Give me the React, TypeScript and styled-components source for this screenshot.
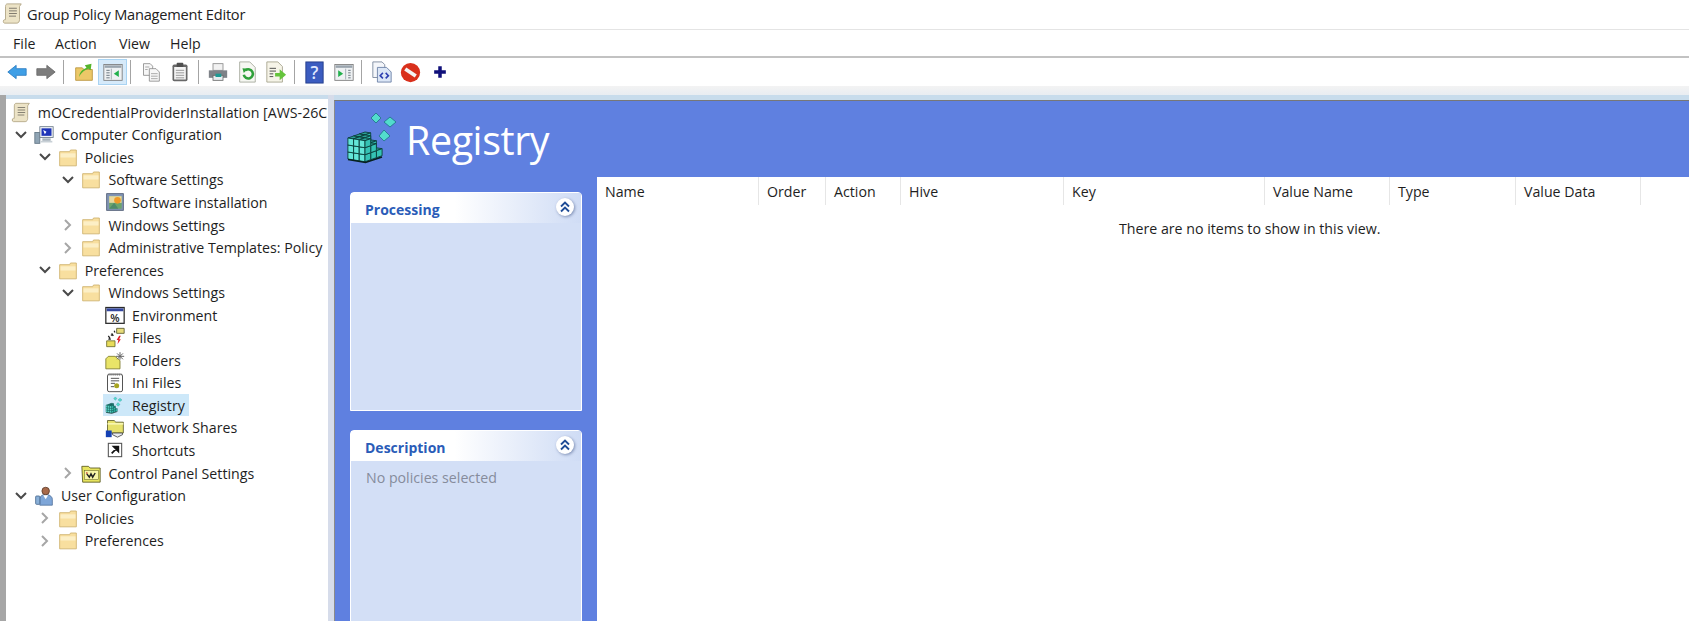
import { ReactNode } from "react";
import styled, { createGlobalStyle } from "styled-components";

const FONT = `"Open Sans", "Noto Sans", "Liberation Sans", sans-serif`;

const GlobalStyle = createGlobalStyle`
  html, body {
    margin: 0;
    background: #ffffff;
    overflow: hidden;
  }
  * {
    box-sizing: border-box;
  }
`;

const Page = styled.div`
  display: flex;
  flex-direction: column;
  width: 1689px;
  height: 621px;
  overflow: hidden;
  font-family: ${FONT};
  color: #1e1e1e;
`;

const TitleBar = styled.div`
  display: flex;
  align-items: center;
  gap: 4px;
  height: 30px;
  padding: 0 0 2px 2px;
  border-bottom: 1px solid #e4e4e4;
  font-size: 14.6px;
  letter-spacing: -0.22px;
  color: #222222;
`;

const MenuBar = styled.div`
  display: flex;
  height: 28px;
  padding-left: 13px;
  align-items: center;
  border-bottom: 2px solid #c2c2c2;
  font-size: 14.2px;
`;

const MenuItem = styled.span<{ $width: number }>`
  width: ${(p) => p.$width}px;
`;

const Toolbar = styled.div`
  display: flex;
  align-items: center;
  height: 28px;
  padding-left: 2px;
  background: #ffffff;
`;

const ToolButton = styled.div<{ $active?: boolean }>`
  display: flex;
  align-items: center;
  justify-content: center;
  width: 29px;
  height: 26px;
  border: 1px solid ${(p) => (p.$active ? "#a9d3f2" : "transparent")};
  background: ${(p) => (p.$active ? "#d6eafa" : "transparent")};
`;

const ToolSeparator = styled.div`
  width: 1px;
  height: 24px;
  margin: 0 5.3px 0 3px;
  background: #a4a4a4;
`;

const Strip = styled.div`
  height: 9px;
  background: linear-gradient(#f3f3f3, #e9edf2);
`;

const Workspace = styled.div`
  display: flex;
  flex: 1;
  min-height: 0;
  background: #c8dcec;
`;

const LeftEdge = styled.div`
  width: 6px;
  background: #a6a6a6;
`;

const TreePane = styled.div`
  width: 322px;
  margin-top: 4px;
  padding-top: 2px;
  background: #ffffff;
  font-size: 14.2px;
  overflow: hidden;
`;

const TreeRow = styled.div<{ $level: number }>`
  display: flex;
  align-items: center;
  height: 22.56px;
  padding-left: ${(p) => 6 + p.$level * 23.7}px;
  white-space: nowrap;
`;

const Chevron = styled.div<{ $open?: boolean }>`
  display: flex;
  align-items: center;
  justify-content: center;
  flex: none;
  width: 18px;
  margin-right: 4px;
  color: ${(p) => (p.$open ? "#4a4a4a" : "#a6a6a6")};
`;

const TreeEntry = styled.div<{ $selected?: boolean }>`
  display: flex;
  align-items: center;
  gap: 7px;
  height: 22px;
  margin-left: -2px;
  padding: 0 4px 0 2px;
  background: ${(p) => (p.$selected ? "#cde8f9" : "transparent")};
`;

const IconSlot = styled.div`
  display: flex;
  align-items: center;
  justify-content: center;
  flex: none;
  width: 20px;
`;

const Splitter = styled.div`
  width: 6px;
  background: #d6dcea;
`;

const Details = styled.div`
  display: flex;
  flex: 1;
  flex-direction: column;
  min-width: 0;
  margin-top: 5px;
  border-top: 1px solid #777777;
  border-left: 1px solid #8a8a8a;
  background: #5f80e0;
`;

const Banner = styled.div`
  display: flex;
  align-items: center;
  flex: none;
  height: 76px;
  padding: 0 0 0 10px;
  gap: 1px;
`;

const BannerTitle = styled.h1`
  margin: 0;
  padding-top: 2px;
  font-size: 39.4px;
  font-weight: 400;
  color: #ffffff;
  letter-spacing: -0.4px;
`;

const Body = styled.div`
  display: flex;
  flex: 1;
  min-height: 0;
`;

const Sidebar = styled.div`
  display: flex;
  flex: none;
  flex-direction: column;
  gap: 19px;
  width: 262px;
  padding: 15px 15px 0 15px;
  overflow: hidden;
`;

const Panel = styled.section<{ $height: number }>`
  flex: none;
  height: ${(p) => p.$height}px;
  border: 1px solid #ffffff;
  border-radius: 4px 4px 0 0;
  background: #d3dff6;
`;

const PanelHeader = styled.div`
  display: flex;
  align-items: center;
  justify-content: space-between;
  height: 30px;
  padding: 3px 7px 0 14px;
  background: linear-gradient(90deg, #ffffff 0%, #ffffff 45%, #cfdcf5 100%);
  font-size: 14px;
  font-weight: 700;
  color: #2a5cb8;
`;

const CollapseButton = styled.div`
  display: flex;
  align-items: center;
  justify-content: center;
  width: 18px;
  height: 18px;
  margin-top: -5px;
  border-radius: 50%;
  background: #ffffff;
  box-shadow: 1px 1px 3px rgba(60, 80, 130, 0.55);
`;

const PanelText = styled.div`
  padding: 7px 15px;
  font-size: 14.2px;
  color: #868c9c;
`;

const ListPane = styled.div`
  flex: 1;
  min-width: 0;
  background: #ffffff;
`;

const ListHeader = styled.div`
  display: grid;
  grid-template-columns: 162px 67px 75px 163px 201px 125px 126px 125px;
  height: 28px;
`;

const ColumnHead = styled.div`
  display: flex;
  align-items: center;
  padding: 0 0 0 8px;
  border-right: 1px solid #e6e6e6;
  font-size: 14.2px;
  white-space: nowrap;
`;

const EmptyMessage = styled.div`
  margin-top: 14px;
  padding-left: 522px;
  font-size: 14.2px;
`;

const Svg = ({ size = 20, children }: { size?: number; children: ReactNode }) => (
  <svg width={size} height={size} viewBox="0 0 24 24">
    {children}
  </svg>
);

const ChevronDown = () => (
  <svg width="14" height="10" viewBox="0 0 14 10">
    <path d="M2 2l5 5 5-5" fill="none" stroke="currentColor" strokeWidth="2" />
  </svg>
);

const ChevronRight = () => (
  <svg width="10" height="14" viewBox="0 0 10 14">
    <path d="M2 2l5 5-5 5" fill="none" stroke="currentColor" strokeWidth="2" />
  </svg>
);

const DoubleUp = () => (
  <svg width="12" height="12" viewBox="0 0 12 12">
    <path d="M2 5.5l4-4 4 4M2 10.5l4-4 4 4" fill="none" stroke="#1f4c96" strokeWidth="1.9" />
  </svg>
);

const ScrollIcon = ({ size = 21 }: { size?: number }) => (
  <Svg size={size}>
    <path d="M6 1h16l-2 3v15c0 2-1 4-3 4H3c-2 0-2-4 0-4h1V4c0-2 1-3 2-3z" fill="#ece3c6" stroke="#b0a383" />
    <path d="M8 6h9M8 9h9M8 12h9M8 15h8" stroke="#7d786c" strokeWidth="1.1" />
  </Svg>
);

const FolderIcon = () => (
  <Svg size={21}>
    <path d="M2 5h12l1-2h7v19H2z" fill="#f8df9f" stroke="#cdb06a" />
    <path d="M3 7h18v5H3z" fill="#fcefc6" />
  </Svg>
);

const ComputerIcon = () => (
  <Svg size={22}>
    <rect x="1" y="9" width="6" height="13" fill="#8fa4b4" stroke="#5f7382" />
    <rect x="7" y="2" width="16" height="13" fill="#f0f3f6" stroke="#6a7a88" />
    <rect x="9" y="4" width="12" height="9" fill="#1f35b8" />
    <path d="M11 6l4 2-2 3z" fill="#ffffff" />
    <path d="M10 16h10v3H10z" fill="#a9b4bd" />
    <path d="M8 19h14v2H8z" fill="#c8d0d6" />
  </Svg>
);

const SoftwareIcon = () => (
  <Svg size={20}>
    <rect x="2" y="2" width="20" height="20" fill="#8094b4" stroke="#4c5a72" />
    <rect x="5" y="5" width="15" height="15" fill="#6ca56c" />
    <rect x="5" y="5" width="15" height="8" fill="#e8d8a0" />
    <circle cx="15" cy="10" r="4" fill="#f09a28" />
    <path d="M5 20l6-7 5 7z" fill="#4f8a6a" />
  </Svg>
);

const EnvironmentIcon = () => (
  <Svg size={22}>
    <rect x="1" y="3" width="22" height="19" fill="#ffffff" stroke="#2a2a2a" strokeWidth="1.5" />
    <rect x="2" y="4" width="20" height="3.5" fill="#34479e" />
    <text x="12" y="20" fontSize="13" fontWeight="600" textAnchor="middle" fontFamily={FONT} fill="#222222">
      %
    </text>
  </Svg>
);

const FilesIcon = () => (
  <Svg size={21}>
    <path d="M14 1h9v6h-9z" fill="#e8dc7a" stroke="#55552a" />
    <path d="M2 16h10v7H2z" fill="#e8dc5a" stroke="#6a6a2a" />
    <path d="M8 7l2 3M4 10l2 3M11 4l1 2M4 14h3M7 9h2" stroke="#222222" strokeWidth="1.5" />
    <path d="M17 10l-3 5h2l-1 5 4-6h-2l2-4z" fill="#e0202c" />
  </Svg>
);

const FoldersIcon = () => (
  <Svg size={21}>
    <path d="M1 10l3-3h8l6 5v10H1z" fill="#e9e468" stroke="#7c7a2a" />
    <path d="M18 2v9M13 7h10M14.5 3.5l7 7M21.5 3.5l-7 7" stroke="#666666" strokeWidth="1.2" />
  </Svg>
);

const IniIcon = () => (
  <Svg size={21}>
    <rect x="3" y="2" width="18" height="21" rx="2" fill="#ffffff" stroke="#333333" />
    <path d="M4 2.5h16" stroke="#777777" strokeWidth="2" strokeDasharray="1.5 1" />
    <path d="M7 7h10M7 10h10M7 13h5M7 17h4" stroke="#333333" />
    <circle cx="14" cy="16" r="3" fill="#a8a520" />
  </Svg>
);

const NetworkIcon = () => (
  <Svg size={22}>
    <path d="M3 3h8l2 2h9v13H3z" fill="#e6e16c" stroke="#5b5b2a" />
    <path d="M3 7h19" stroke="#f8f6b0" strokeWidth="2" />
    <rect x="1" y="15" width="7" height="8" fill="#1440b4" />
    <path d="M9 18h12v2l-6 3-6-3z" fill="#e8ebf0" stroke="#444444" />
  </Svg>
);

const ShortcutIcon = () => (
  <Svg size={16}>
    <rect x="2" y="2" width="20" height="20" fill="#ffffff" stroke="#555555" strokeWidth="1.6" />
    <path d="M7 17l6-6M10 7h7v7z" stroke="#111111" strokeWidth="2.6" fill="#111111" />
  </Svg>
);

const ControlPanelIcon = () => (
  <Svg size={22}>
    <path d="M1 4h8l2 2h12v17H2z" fill="#e7e45e" stroke="#55551f" />
    <rect x="4" y="9" width="17" height="11" fill="#f8f6a8" stroke="#55551f" strokeWidth="0.6" />
    <path d="M7 13l3 4 2-4 2 4 3-5" fill="none" stroke="#222222" strokeWidth="1.7" />
    <circle cx="7" cy="12" r="1" fill="#c02020" />
  </Svg>
);

const UserIcon = () => (
  <Svg size={22}>
    <path d="M7 23V15c0-3 4-5 7-5s8 2 8 6v7z" fill="#7ea6d8" stroke="#55759e" />
    <circle cx="14" cy="6" r="4.5" fill="#a86a4a" stroke="#5e3c2a" />
    <rect x="2" y="12" width="5" height="10" rx="1" fill="#8ab0d8" stroke="#46678e" />
    <path d="M11 11l3 5 3-5z" fill="#ffffff" />
  </Svg>
);

// small cubes on a skewed projection, painted from the back corner to the front
const RegistryIcon = ({ size }: { size: number }) => {
  const missing = new Set(["2-0-2", "2-1-2", "1-0-2", "2-0-1"]);
  const cubes: ReactNode[] = [];
  const pt = (a: number, b: number, c: number) =>
    `${20 + (a - b) * 5.7},${43 + a * 0.9 + b * 2 - c * 7}`;
  for (let c = 0; c < 3; c++) {
    for (let a = 0; a < 3; a++) {
      for (let b = 0; b < 3; b++) {
        if (missing.has(`${a}-${b}-${c}`)) continue;
        cubes.push(
          <g key={`${a}-${b}-${c}`} stroke="#0a3f3c" strokeWidth="0.9">
            <polygon
              fill="#2a9f94"
              points={`${pt(a, b, c + 1)} ${pt(a + 1, b, c + 1)} ${pt(a + 1, b + 1, c + 1)} ${pt(a, b + 1, c + 1)}`}
            />
            <polygon
              fill="#63e6d8"
              points={`${pt(a, b + 1, c + 1)} ${pt(a + 1, b + 1, c + 1)} ${pt(a + 1, b + 1, c)} ${pt(a, b + 1, c)}`}
            />
            <polygon
              fill="#35c2b4"
              points={`${pt(a + 1, b, c + 1)} ${pt(a + 1, b + 1, c + 1)} ${pt(a + 1, b + 1, c)} ${pt(a + 1, b, c)}`}
            />
          </g>
        );
      }
    }
  }
  return (
    <svg width={size} height={(size * 58) / 60} viewBox="0 0 60 58">
      {cubes}
      <path d="M3 49.5L20.5 52.5 37 47" fill="none" stroke="#06211f" strokeWidth="1.6" />
      <g stroke="#1f6f88" strokeWidth="0.8" fill="#52dccd">
        <polygon points="31,3 36,8 31,13 26,8" />
        <polygon points="45,7 51,12 45,17 39,12" />
        <polygon points="39,20 45,26 39,31 34,26" />
      </g>
    </svg>
  );
};

const BackIcon = () => (
  <Svg>
    <path d="M1 12l10-8v4h12v8H11v4z" fill="#3f9fe6" stroke="#2b7cc2" />
  </Svg>
);

const ForwardIcon = () => (
  <Svg>
    <path d="M23 12L13 4v4H1v8h12v4z" fill="#7d7d7d" stroke="#6a6a6a" />
  </Svg>
);

const UpFolderIcon = () => (
  <Svg>
    <path d="M2 7h8l2 2h10v13H2z" fill="#ecc868" stroke="#b8923a" />
    <path d="M6 18c1-6 4-9 9-11l-2-3 8-2-1 8-3-2c-3 1-8 4-11 10z" fill="#55b52c" />
  </Svg>
);

const WindowIcon = ({ arrow }: { arrow: "left" | "right" }) => (
  <Svg>
    <rect x="1" y="3" width="22" height="19" fill="#eef1f3" stroke="#777777" />
    <rect x="2" y="4" width="20" height="3" fill="#9aa4ae" />
    {arrow === "left" ? (
      <>
        <path d="M4 10h4M4 13h4M4 16h4M4 19h4" stroke="#6f7a84" strokeWidth="1.2" />
        <path d="M10 8v13" stroke="#9aa4ae" />
        <path d="M13 14l6-4v8z" fill="#22b04c" />
      </>
    ) : (
      <>
        <path d="M17 10h3M17 13h3M17 16h3M17 19h3" stroke="#6f7a84" strokeWidth="1.2" />
        <path d="M14 8v13" stroke="#9aa4ae" />
        <path d="M11 14l-6-4v8z" fill="#22b04c" />
      </>
    )}
  </Svg>
);

const CopyIcon = () => (
  <Svg>
    <path d="M3 2h8l3 3v11H3z" fill="#f7f7f7" stroke="#8a8a8a" />
    <path d="M10 8h8l4 4v11H10z" fill="#f7f7f7" stroke="#8a8a8a" />
    <path d="M5 6h5M5 9h3M12 14h8M12 17h8M12 20h8" stroke="#9a9a9a" />
  </Svg>
);

const PasteIcon = () => (
  <Svg>
    <rect x="3" y="3" width="18" height="20" rx="2" fill="#686868" />
    <rect x="5" y="6" width="14" height="15" fill="#f4f4f4" />
    <rect x="8" y="1" width="8" height="5" rx="1" fill="#4f4f4f" />
    <path d="M7 10h10M7 13h10M7 16h10M7 19h10" stroke="#888888" />
  </Svg>
);

const PrintIcon = () => (
  <Svg>
    <rect x="6" y="2" width="12" height="8" fill="#f2f2f2" stroke="#8a8a8a" />
    <path d="M1 10h22v9H1z" fill="#7e8288" />
    <rect x="6" y="16" width="12" height="6" fill="#e8ecef" stroke="#6a6a6a" />
    <rect x="9" y="14" width="7" height="4" fill="#1d9a94" />
  </Svg>
);

const RefreshIcon = () => (
  <Svg size={22}>
    <path d="M4 1h11l6 6v16H4z" fill="#f6f7f2" stroke="#a8aca0" />
    <path d="M8.5 15a5 5 0 1 0 2-5" fill="none" stroke="#2fa03a" strokeWidth="2.8" />
    <path d="M7 8l6 .5L8.5 13z" fill="#2fa03a" />
  </Svg>
);

const ExportIcon = () => (
  <Svg size={22}>
    <path d="M2 1h12l5 5v17H2z" fill="#f6f4e8" stroke="#a8a690" />
    <path d="M5 8h7M5 11h7M5 14h4M5 17h4" stroke="#444444" />
    <path d="M11 13h5V9l7 6-7 6v-4h-5z" fill="#65c43c" />
  </Svg>
);

const HelpIcon = () => (
  <Svg size={23}>
    <rect x="3" y="1" width="18" height="22" fill="#3b5cc0" stroke="#263f8c" />
    <text x="12" y="18.5" fontSize="18" fontWeight="600" textAnchor="middle" fontFamily={FONT} fill="#dfe8ff">
      ?
    </text>
  </Svg>
);

const ScriptIcon = () => (
  <Svg size={22}>
    <path d="M2 1h10l3 3v14H2z" fill="#f4f6fa" stroke="#7f8ba0" />
    <path d="M7 7h10l5 5v11H7z" fill="#dbe6f6" stroke="#6d83a8" />
    <path d="M13 13l-3 3 3 3M16 13l3 3-3 3" fill="none" stroke="#2d3fb0" strokeWidth="1.7" />
  </Svg>
);

const StopIcon = () => (
  <Svg size={21}>
    <circle cx="12" cy="12" r="11" fill="#d9301c" />
    <path d="M6 8l12 8" stroke="#f4f4f4" strokeWidth="4.4" />
  </Svg>
);

const PlusIcon = () => (
  <Svg size={14}>
    <path d="M9 2h6v7h7v6h-7v7H9v-7H2V9h7z" fill="#10107a" />
  </Svg>
);

type Node = {
  label: string;
  level: number;
  open?: boolean;
  hasChildren?: boolean;
  selected?: boolean;
  icon: ReactNode;
};

const treeRows: Node[] = [
  { label: "Computer Configuration", level: 0, hasChildren: true, open: true, icon: <ComputerIcon /> },
  { label: "Policies", level: 1, hasChildren: true, open: true, icon: <FolderIcon /> },
  { label: "Software Settings", level: 2, hasChildren: true, open: true, icon: <FolderIcon /> },
  { label: "Software installation", level: 3, icon: <SoftwareIcon /> },
  { label: "Windows Settings", level: 2, hasChildren: true, icon: <FolderIcon /> },
  { label: "Administrative Templates: Policy", level: 2, hasChildren: true, icon: <FolderIcon /> },
  { label: "Preferences", level: 1, hasChildren: true, open: true, icon: <FolderIcon /> },
  { label: "Windows Settings", level: 2, hasChildren: true, open: true, icon: <FolderIcon /> },
  { label: "Environment", level: 3, icon: <EnvironmentIcon /> },
  { label: "Files", level: 3, icon: <FilesIcon /> },
  { label: "Folders", level: 3, icon: <FoldersIcon /> },
  { label: "Ini Files", level: 3, icon: <IniIcon /> },
  { label: "Registry", level: 3, selected: true, icon: <RegistryIcon size={26} /> },
  { label: "Network Shares", level: 3, icon: <NetworkIcon /> },
  { label: "Shortcuts", level: 3, icon: <ShortcutIcon /> },
  { label: "Control Panel Settings", level: 2, hasChildren: true, icon: <ControlPanelIcon /> },
  { label: "User Configuration", level: 0, hasChildren: true, open: true, icon: <UserIcon /> },
  { label: "Policies", level: 1, hasChildren: true, icon: <FolderIcon /> },
  { label: "Preferences", level: 1, hasChildren: true, icon: <FolderIcon /> },
];

const columns = ["Name", "Order", "Action", "Hive", "Key", "Value Name", "Type", "Value Data"];

const App = () => (
  <Page>
    <GlobalStyle />
    <TitleBar>
      <ScrollIcon />
      Group Policy Management Editor
    </TitleBar>
    <MenuBar>
      <MenuItem $width={42}>File</MenuItem>
      <MenuItem $width={64}>Action</MenuItem>
      <MenuItem $width={51}>View</MenuItem>
      <MenuItem $width={40}>Help</MenuItem>
    </MenuBar>
    <Toolbar>
      <ToolButton><BackIcon /></ToolButton>
      <ToolButton><ForwardIcon /></ToolButton>
      <ToolSeparator />
      <ToolButton><UpFolderIcon /></ToolButton>
      <ToolButton $active><WindowIcon arrow="left" /></ToolButton>
      <ToolSeparator />
      <ToolButton><CopyIcon /></ToolButton>
      <ToolButton><PasteIcon /></ToolButton>
      <ToolSeparator />
      <ToolButton><PrintIcon /></ToolButton>
      <ToolButton><RefreshIcon /></ToolButton>
      <ToolButton><ExportIcon /></ToolButton>
      <ToolSeparator />
      <ToolButton><HelpIcon /></ToolButton>
      <ToolButton><WindowIcon arrow="right" /></ToolButton>
      <ToolSeparator />
      <ToolButton><ScriptIcon /></ToolButton>
      <ToolButton><StopIcon /></ToolButton>
      <ToolButton><PlusIcon /></ToolButton>
    </Toolbar>
    <Strip />
    <Workspace>
      <LeftEdge />
      <TreePane>
        <TreeRow $level={-0.05}>
          <TreeEntry>
            <IconSlot><ScrollIcon /></IconSlot>
            mOCredentialProviderInstallation [AWS-26C
          </TreeEntry>
        </TreeRow>
        {treeRows.map((row, i) => (
          <TreeRow key={i} $level={row.level}>
            <Chevron $open={row.open}>
              {row.hasChildren && (row.open ? <ChevronDown /> : <ChevronRight />)}
            </Chevron>
            <TreeEntry $selected={row.selected}>
              <IconSlot>{row.icon}</IconSlot>
              {row.label}
            </TreeEntry>
          </TreeRow>
        ))}
      </TreePane>
      <Splitter />
      <Details>
        <Banner>
          <RegistryIcon size={60} />
          <BannerTitle>Registry</BannerTitle>
        </Banner>
        <Body>
          <Sidebar>
            <Panel $height={219}>
              <PanelHeader>
                Processing
                <CollapseButton><DoubleUp /></CollapseButton>
              </PanelHeader>
            </Panel>
            <Panel $height={240}>
              <PanelHeader>
                Description
                <CollapseButton><DoubleUp /></CollapseButton>
              </PanelHeader>
              <PanelText>No policies selected</PanelText>
            </Panel>
          </Sidebar>
          <ListPane>
            <ListHeader>
              {columns.map((c) => (
                <ColumnHead key={c}>{c}</ColumnHead>
              ))}
            </ListHeader>
            <EmptyMessage>There are no items to show in this view.</EmptyMessage>
          </ListPane>
        </Body>
      </Details>
    </Workspace>
  </Page>
);

export default App;
